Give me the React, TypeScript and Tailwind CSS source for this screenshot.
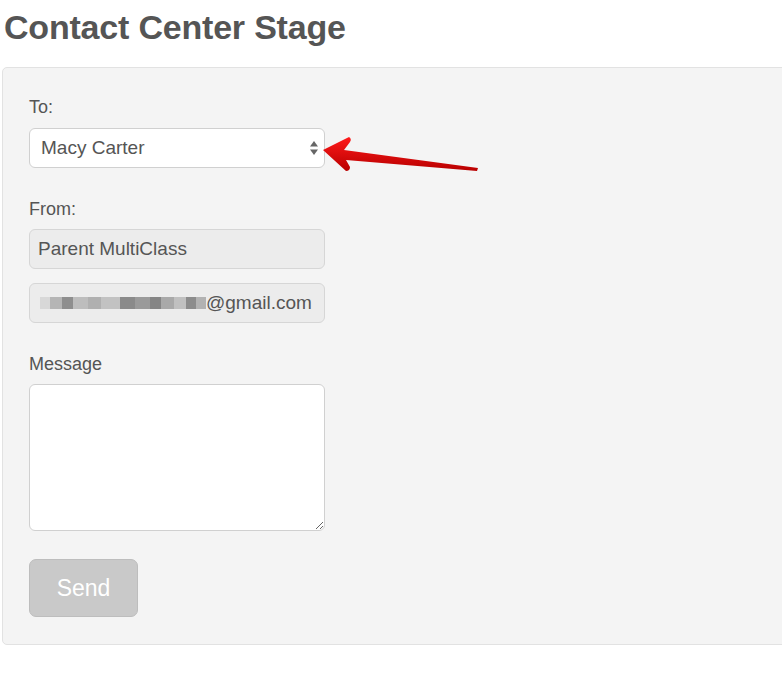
import React from 'react';

const blurBlocks = [
  { w: 10, c: '#d8d8d8' },
  { w: 12, c: '#b5b5b5' },
  { w: 11, c: '#8e8e8e' },
  { w: 15, c: '#bdbdbd' },
  { w: 13, c: '#b0b0b0' },
  { w: 19, c: '#c2c2c2' },
  { w: 15, c: '#8a8a8a' },
  { w: 15, c: '#9a9a9a' },
  { w: 11, c: '#858585' },
  { w: 13, c: '#a9a9a9' },
  { w: 12, c: '#c0c0c0' },
  { w: 10, c: '#8c8c8c' },
  { w: 10, c: '#b2b2b2' },
];

const App = () => {
  return (
    <div
      className="relative w-[782px] h-[694px] bg-white overflow-hidden text-[#555]"
      style={{ fontFamily: '"Liberation Sans", Arial, sans-serif' }}
    >
      <h1 className="pl-[4px] pt-[7px] text-[34px] leading-[40px] font-bold text-[#555] tracking-[-0.2px]">
        Contact Center Stage
      </h1>

      <div className="mt-[20px] ml-[2px] w-[800px] h-[578px] bg-[#f4f4f4] border border-[#e2e2e2] rounded-[5px] pl-[26px] pt-[27px]">
        <label className="block text-[18px] leading-[24px] text-[#555]">To:</label>
        <div className="mt-[9px] w-[296px] h-[40px] bg-white border border-[#d0d0d0] rounded-[6px] flex items-center justify-between pl-[11px] pr-[5px]">
          <span className="text-[19px] text-[#555]">Macy Carter</span>
          <svg width="10" height="16" viewBox="0 0 10 16">
            <path d="M5 1 L9 6.5 L1 6.5 Z" fill="#666" />
            <path d="M5 15 L9 9.5 L1 9.5 Z" fill="#666" />
          </svg>
        </div>

        <label className="block mt-[29px] text-[18px] leading-[24px] text-[#555]">From:</label>
        <div className="mt-[8px] w-[296px] h-[40px] bg-[#ececec] border border-[#d6d6d6] rounded-[6px] flex items-center pl-[8px]">
          <span className="text-[19px] text-[#555]">Parent MultiClass</span>
        </div>
        <div className="mt-[14px] w-[296px] h-[40px] bg-[#ececec] border border-[#d6d6d6] rounded-[6px] flex items-center pl-[10px]">
          <div className="flex h-[12px]">
            {blurBlocks.map((b, i) => (
              <div key={i} className="h-full" style={{ width: b.w, backgroundColor: b.c }} />
            ))}
          </div>
          <span className="text-[19px] text-[#555]">@gmail.com</span>
        </div>

        <label className="block mt-[29px] text-[18px] leading-[24px] text-[#555]">Message</label>
        <textarea
          className="block mt-[8px] w-[296px] h-[147px] bg-white border border-[#d0d0d0] rounded-[6px] resize outline-none"
        />

        <button
          type="button"
          disabled
          className="mt-[28px] w-[109px] h-[58px] bg-[#c9c9c9] border border-[#bdbdbd] rounded-[7px] text-white text-[23px]"
        >
          Send
        </button>
      </div>

      <svg
        className="absolute left-0 top-0 pointer-events-none"
        width="782"
        height="694"
        viewBox="0 0 782 694"
      >
        <defs>
          <linearGradient id="arrowGrad" x1="0" y1="0" x2="0" y2="1">
            <stop offset="0" stopColor="#ff1a1a" />
            <stop offset="1" stopColor="#b80000" />
          </linearGradient>
        </defs>
        <path
          d="M323 150 L349 137 Q352 139 350 142 L344 150 L478 168 L477 171 L346 160 L350 167 Q350 171 346 171 Z"
          fill="url(#arrowGrad)"
        />
      </svg>
    </div>
  );
};

export default App;
